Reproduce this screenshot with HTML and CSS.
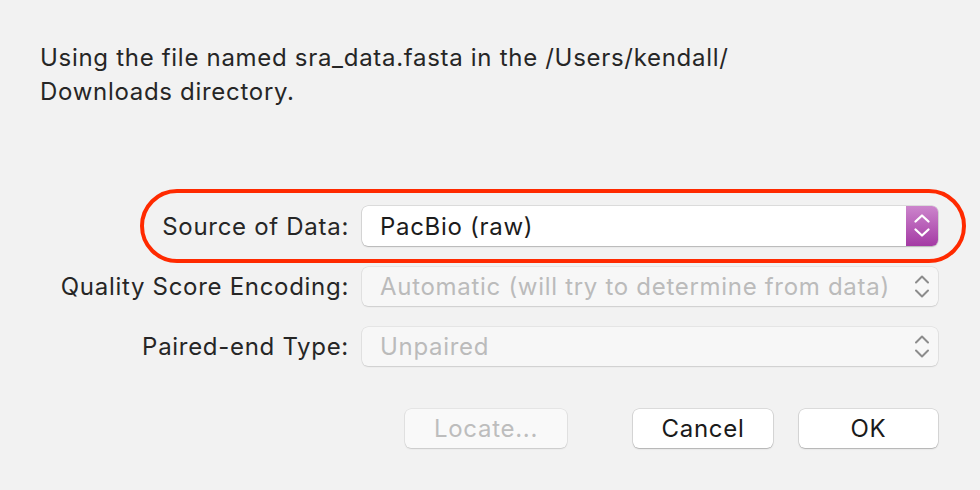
FILE: index.html
```html
<!DOCTYPE html>
<html>
<head>
<meta charset="utf-8">
<link rel="stylesheet" href="styles.css">
</head>
<body>
<div class="dialog">
  <p class="message">Using the file named sra_data.fasta in the /Users/kendall/ Downloads directory.</p>
  <div class="form">
    <div class="highlight"></div>
    <div class="row">
      <span class="label">Source of Data:</span>
      <div class="popup">
        <span class="value">PacBio (raw)</span>
        <span class="stepper active">
          <svg width="32" height="40" viewBox="0 0 32 40"><path d="M9.5 15.5 L16 9.5 L22.5 15.5 M9.5 23.5 L16 29.5 L22.5 23.5" fill="none" stroke="#fff" stroke-width="2.3" stroke-linecap="round" stroke-linejoin="round"/></svg>
        </span>
      </div>
    </div>
    <div class="row">
      <span class="label">Quality Score Encoding:</span>
      <div class="popup disabled">
        <span class="value">Automatic (will try to determine from data)</span>
        <span class="stepper">
          <svg width="32" height="40" viewBox="0 0 32 40"><path d="M10 15.5 L16 9.5 L22 15.5 M10 23.5 L16 29.5 L22 23.5" fill="none" stroke="#8c8c8c" stroke-width="2" stroke-linecap="round" stroke-linejoin="round"/></svg>
        </span>
      </div>
    </div>
    <div class="row">
      <span class="label">Paired-end Type:</span>
      <div class="popup disabled">
        <span class="value">Unpaired</span>
        <span class="stepper">
          <svg width="32" height="40" viewBox="0 0 32 40"><path d="M10 15.5 L16 9.5 L22 15.5 M10 23.5 L16 29.5 L22 23.5" fill="none" stroke="#8c8c8c" stroke-width="2" stroke-linecap="round" stroke-linejoin="round"/></svg>
        </span>
      </div>
    </div>
  </div>
  <div class="buttons">
    <button class="btn locate" disabled>Locate...</button>
    <div class="spacer"></div>
    <button class="btn cancel">Cancel</button>
    <button class="btn">OK</button>
  </div>
</div>
</body>
</html>
```
FILE: styles.css
```css
html, body {
  margin: 0;
  padding: 0;
  background: #f2f2f2;
}
body {
  width: 980px;
  height: 490px;
  overflow: hidden;
  font-family: Inter, "Liberation Sans", sans-serif;
  color: #262626;
  letter-spacing: 0.7px;
}
.dialog {
  padding: 41px 42px 0 40px;
}
.message {
  margin: 0;
  width: 760px;
  font-size: 24px;
  line-height: 34px;
}
.form {
  position: relative;
  margin-top: 97px;
  display: flex;
  flex-direction: column;
  gap: 21px;
}
.highlight {
  position: absolute;
  left: 100px;
  top: -17px;
  width: 818px;
  height: 66px;
  border: 4px solid #ff2a00;
  border-radius: 40px;
  pointer-events: none;
}
.row {
  display: flex;
  align-items: center;
  gap: 13px;
}
.label {
  width: 309px;
  text-align: right;
  font-size: 24px;
}
.popup {
  flex: 1;
  height: 40px;
  display: flex;
  align-items: center;
  background: #fff;
  border-radius: 6px;
  box-shadow: 0 0 0 0.5px rgba(0,0,0,0.18), 0 1px 1.5px rgba(0,0,0,0.18);
  overflow: hidden;
}
.popup.disabled {
  background: #f7f7f7;
  box-shadow: 0 0 0 0.5px rgba(0,0,0,0.1), 0 1px 1.5px rgba(0,0,0,0.1);
  height: 39px;
}
.value {
  flex: 1;
  padding-left: 18px;
  font-size: 24px;
  color: #1c1c1c;
}
.popup.disabled .value {
  color: #bbbbbb;
}
.stepper {
  width: 32px;
  height: 40px;
  display: flex;
}
.stepper.active {
  background: linear-gradient(#cc85cc, #a43aa4);
}
.buttons {
  margin-top: 43px;
  padding-left: 365px;
  display: flex;
  gap: 26px;
}
.spacer {
  width: 40px;
  margin-left: -26px;
}
.btn {
  height: 39px;
  width: 139px;
  border: none;
  border-radius: 6px;
  background: #fff;
  box-shadow: 0 0 0 0.5px rgba(0,0,0,0.18), 0 1px 1.5px rgba(0,0,0,0.2);
  font-family: Inter, "Liberation Sans", sans-serif;
  font-size: 24px;
  letter-spacing: 0.7px;
  color: #1a1a1a;
  padding: 0;
}
.btn.cancel {
  width: 140px;
}
.btn.locate {
  width: 162px;
  background: #f9f9f9;
  color: #bdbdbd;
  box-shadow: 0 0 0 0.5px rgba(0,0,0,0.1), 0 1px 1.5px rgba(0,0,0,0.12);
}
```
